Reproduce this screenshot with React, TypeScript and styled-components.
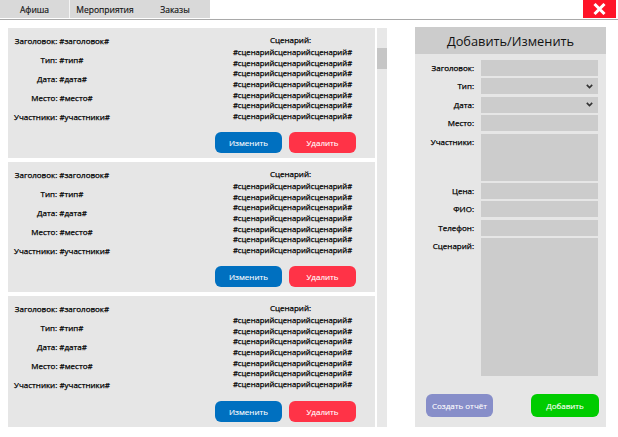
import React from "react";
import styled, { createGlobalStyle } from "styled-components";

const GlobalStyle = createGlobalStyle`
  html, body { margin: 0; padding: 0; background: #ffffff; }
  body { font-family: "Open Sans", "Noto Sans", sans-serif; color: #000; }
  * { box-sizing: border-box; }
`;

const Page = styled.div`
  width: 618px;
  height: 437px;
  overflow: hidden;
`;

const TopBar = styled.div`
  height: 20px;
  display: flex;
  justify-content: space-between;
  align-items: flex-start;
  border-bottom: 1px solid #a9a9a9;
  padding-right: 2px;
`;

const Tabs = styled.nav`
  display: flex;
  height: 18px;
  background: #d9d9d9;
`;

const Tab = styled.div<{ $divider?: boolean }>`
  width: 70px;
  height: 18px;
  display: flex;
  align-items: center;
  justify-content: center;
  font-size: 8.5px;
  color: #111;
  -webkit-text-stroke: 0.15px #111;
  border-right: ${(p) => (p.$divider ? "1px solid #f4f4f4" : "none")};
`;

const CloseButton = styled.button`
  width: 33px;
  height: 18px;
  border: none;
  padding: 0;
  background: #ff1428;
  display: flex;
  align-items: center;
  justify-content: center;
`;

const Main = styled.div`
  display: flex;
  align-items: flex-start;
  padding: 7px 0 0 8px;
`;

const ListArea = styled.div`
  display: flex;
  gap: 2px;
  margin-top: 1px;
`;

const CardList = styled.div`
  width: 367px;
  display: flex;
  flex-direction: column;
  gap: 4px;
`;

const Card = styled.section<{ $h: number }>`
  height: ${(p) => p.$h}px;
  background: #e6e6e6;
  display: flex;
  font-size: 8px;
  color: #000;
  -webkit-text-stroke: 0.25px #000;
`;

const InfoColumn = styled.div`
  width: 108px;
  padding-top: 3px;
  text-align: center;
  line-height: 19px;
`;

const InfoLine = styled.div`
  white-space: nowrap;
`;

const ScenarioColumn = styled.div`
  flex: 1;
  margin-left: 94px;
  display: flex;
  flex-direction: column;
  padding: 6px 0 5px 0;
`;

const ScenarioTitle = styled.div`
  text-align: center;
  line-height: 12px;
  margin-bottom: 1px;
  padding-right: 4px;
`;

const ScenarioLine = styled.div`
  text-align: center;
  font-size: 7.7px;
  line-height: 10.67px;
  white-space: nowrap;
`;

const CardActions = styled.div`
  margin-top: auto;
  display: flex;
  justify-content: flex-end;
  gap: 7px;
  padding-right: 19px;
`;

const PillButton = styled.button<{ $bg: string; $w: number; $h: number }>`
  width: ${(p) => p.$w}px;
  height: ${(p) => p.$h}px;
  border: none;
  border-radius: 6px;
  background: ${(p) => p.$bg};
  color: #ffffff;
  -webkit-text-stroke: 0.1px #ffffff;
  font-family: "Open Sans", "Noto Sans", sans-serif;
  font-size: 8px;
  padding: 0;
`;

const ScrollTrack = styled.div`
  width: 10px;
  height: 399px;
  background: #e8e8e8;
  padding-top: 20px;
`;

const ScrollThumb = styled.div`
  height: 21px;
  background: #c6c6c6;
`;

const EditorPanel = styled.aside`
  margin-left: 28px;
  width: 191px;
  height: 400px;
  background: #e6e6e6;
  display: flex;
  flex-direction: column;
`;

const EditorHeader = styled.h2`
  margin: 0;
  height: 27px;
  background: #cccccc;
  font-size: 12.8px;
  font-weight: 400;
  display: flex;
  align-items: center;
  justify-content: center;
  color: #111;
`;

const Form = styled.div`
  display: grid;
  grid-template-columns: 59px 117px;
  column-gap: 7px;
  row-gap: 2.4px;
  padding-top: 6px;
`;

const Label = styled.label`
  font-size: 8px;
  line-height: 15px;
  text-align: right;
  white-space: nowrap;
  color: #000;
  -webkit-text-stroke: 0.25px #000;
`;

const Field = styled.div<{ $h: number }>`
  height: ${(p) => p.$h}px;
  background: #cccccc;
  display: flex;
  align-items: center;
  justify-content: flex-end;
  padding-right: 5px;
`;

const EditorActions = styled.div`
  margin-top: auto;
  display: flex;
  justify-content: space-between;
  padding: 0 7px 10px 11px;
`;

const Chevron = () => (
  <svg width="7" height="5" viewBox="0 0 7 5">
    <polyline points="0.8,0.9 3.5,3.6 6.2,0.9" fill="none" stroke="#333" strokeWidth="1.6" />
  </svg>
);

const CloseIcon = () => (
  <svg width="13" height="12" viewBox="0 0 13 12">
    <path d="M1.5 1 L11.5 11 M11.5 1 L1.5 11" stroke="#fff" strokeWidth="3" strokeLinecap="butt" />
  </svg>
);

const scenarioLines = Array.from({ length: 7 }, () => "#сценарийсценарийсценарий#");

const EventCard = ({ h }: { h: number }) => (
  <Card $h={h}>
    <InfoColumn>
      <InfoLine>Заголовок: #заголовок#</InfoLine>
      <InfoLine>Тип: #тип#</InfoLine>
      <InfoLine>Дата: #дата#</InfoLine>
      <InfoLine>Место: #место#</InfoLine>
      <InfoLine>Участники: #участники#</InfoLine>
    </InfoColumn>
    <ScenarioColumn>
      <ScenarioTitle>Сценарий:</ScenarioTitle>
      {scenarioLines.map((l, i) => (
        <ScenarioLine key={i}>{l}</ScenarioLine>
      ))}
      <CardActions>
        <PillButton $bg="#0070c0" $w={67} $h={21}>Изменить</PillButton>
        <PillButton $bg="#ff3347" $w={67} $h={21}>Удалить</PillButton>
      </CardActions>
    </ScenarioColumn>
  </Card>
);

const fields: { label: string; h: number; select?: boolean }[] = [
  { label: "Заголовок:", h: 16 },
  { label: "Тип:", h: 16, select: true },
  { label: "Дата:", h: 16, select: true },
  { label: "Место:", h: 16 },
  { label: "Участники:", h: 47 },
  { label: "Цена:", h: 16 },
  { label: "ФИО:", h: 16 },
  { label: "Телефон:", h: 16 },
  { label: "Сценарий:", h: 138 },
];

export default function App() {
  return (
    <Page>
      <GlobalStyle />
      <TopBar>
        <Tabs>
          <Tab $divider>Афиша</Tab>
          <Tab>Мероприятия</Tab>
          <Tab>Заказы</Tab>
        </Tabs>
        <CloseButton aria-label="Закрыть">
          <CloseIcon />
        </CloseButton>
      </TopBar>
      <Main>
        <ListArea>
          <CardList>
            <EventCard h={130} />
            <EventCard h={130} />
            <EventCard h={131} />
          </CardList>
          <ScrollTrack>
            <ScrollThumb />
          </ScrollTrack>
        </ListArea>
        <EditorPanel>
          <EditorHeader>Добавить/Изменить</EditorHeader>
          <Form>
            {fields.map((f) => (
              <React.Fragment key={f.label}>
                <Label>{f.label}</Label>
                <Field $h={f.h}>{f.select && <Chevron />}</Field>
              </React.Fragment>
            ))}
          </Form>
          <EditorActions>
            <PillButton $bg="#878ec9" $w={67} $h={23}>Создать отчёт</PillButton>
            <PillButton $bg="#00cc00" $w={68} $h={23}>Добавить</PillButton>
          </EditorActions>
        </EditorPanel>
      </Main>
    </Page>
  );
}
